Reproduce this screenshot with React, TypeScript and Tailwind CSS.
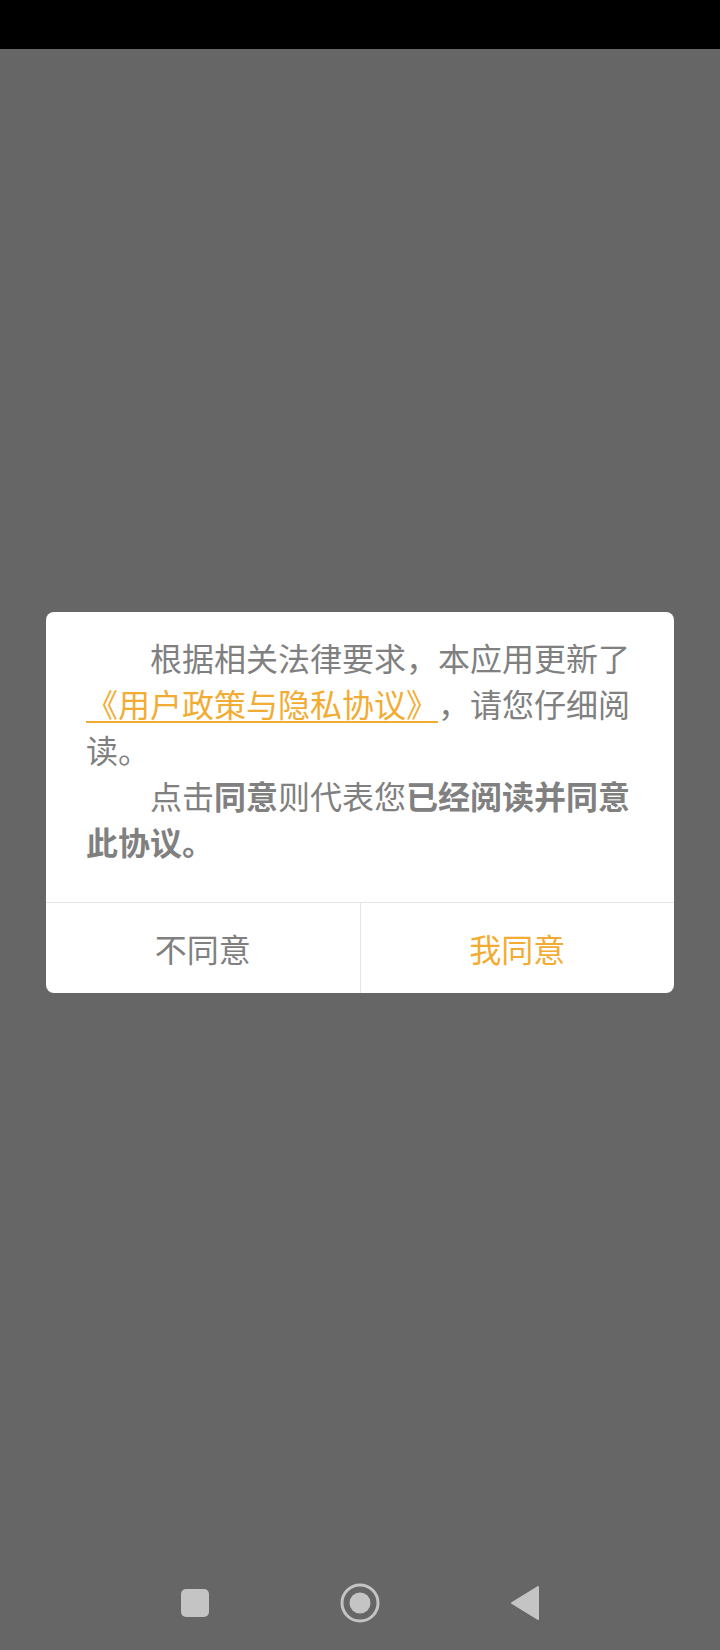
import React from "react";

export default function App() {
  const font = { fontFamily: '"Noto Sans CJK SC", "Noto Sans", sans-serif' };
  return (
    <div className="w-[720px] h-[1650px] flex flex-col bg-[#666666] [text-spacing-trim:space-all]" style={font}>
      <div className="h-[49px] bg-black shrink-0" />
      <div className="flex-1 flex items-center justify-center px-[46px]">
        <div className="w-full bg-white rounded-lg overflow-hidden">
          <div className="pt-[22px] pb-[38px] px-[40px] text-[32px] leading-[46px] text-[#808080] [text-spacing-trim:space-all]">
            <p className="indent-[2em]">
              根据相关法律要求，本应用更新了
              <span className="text-[#f2ac33] underline decoration-2 underline-offset-[4px] decoration-[#f2ac33]">《用户政策与隐私协议》</span>
              ，请您仔细阅读。
            </p>
            <p className="indent-[2em]">
              点击<span className="font-bold">同意</span>则代表您<span className="font-bold">已经阅读并同意此协议。</span>
            </p>
          </div>
          <div className="flex border-t border-[#e5e5e5] h-[91px]">
            <div className="flex-1 flex items-center justify-center text-[32px] text-[#808080] border-r border-[#e5e5e5]">
              不同意
            </div>
            <div className="flex-1 flex items-center justify-center text-[32px] text-[#f2ac33]">
              我同意
            </div>
          </div>
        </div>
      </div>
      <div className="h-[94px] shrink-0 flex items-center justify-center">
        <div className="w-[165px] flex justify-center">
          <svg width="28" height="28" viewBox="0 0 28 28">
            <rect x="0" y="0" width="28" height="28" rx="5" fill="#c4c4c4" />
          </svg>
        </div>
        <div className="w-[165px] flex justify-center">
          <svg width="40" height="40" viewBox="0 0 40 40">
            <circle cx="20" cy="20" r="18" fill="none" stroke="#c4c4c4" strokeWidth="3" />
            <circle cx="20" cy="20" r="10.5" fill="#c4c4c4" />
          </svg>
        </div>
        <div className="w-[165px] flex justify-center">
          <svg width="30" height="36" viewBox="0 0 30 36">
            <path d="M28 2 L28 34 L2 18 Z" fill="#c4c4c4" stroke="#c4c4c4" strokeWidth="2" strokeLinejoin="round" />
          </svg>
        </div>
      </div>
    </div>
  );
}
